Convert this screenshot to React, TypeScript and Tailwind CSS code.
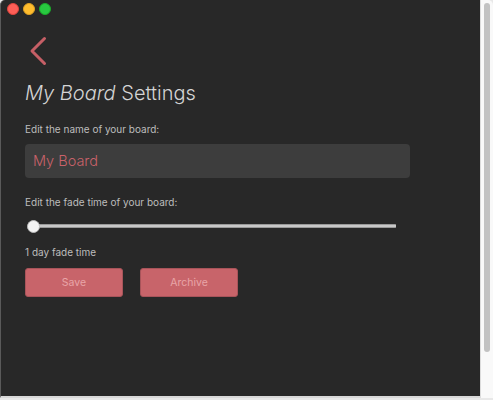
import React from "react";

export default function App() {
  return (
    <div className="w-[493px] h-[400px] bg-[#e8e8e8] flex" style={{ fontFamily: "Inter, 'Noto Sans', sans-serif" }}>
      <div className="flex flex-col w-[480px] h-[398px] bg-[#282828] border-l border-[#5a5a5a] border-b-2 border-b-[#d8d8d8] rounded-tl-[5px]">
        <div className="flex items-center gap-[4px] pl-[6px] pt-[3px] h-[15px]">
          <span className="w-[12px] h-[12px] rounded-full bg-[#fe5f57] border border-[#e0443e]" />
          <span className="w-[12px] h-[12px] rounded-full bg-[#febc2e] border border-[#dea123]" />
          <span className="w-[12px] h-[12px] rounded-full bg-[#28c840] border border-[#1aab29]" />
        </div>
        <div className="pl-[24px] flex flex-col">
          <svg className="mt-[21px] ml-[4px]" width="18" height="30" viewBox="0 0 18 30">
            <polyline points="15.5,2.5 3,15 15.5,27.5" fill="none" stroke="#c65f66" strokeWidth="3" strokeLinecap="round" strokeLinejoin="round" />
          </svg>
          <h1 className="mt-[14px] text-[20px] leading-[26px] font-light text-[#d4d4d4]">
            <span className="italic">My Board</span> Settings
          </h1>
          <p className="mt-[16px] text-[10px] leading-[14px] text-[#bdbdbd]">Edit the name of your board:</p>
          <div className="mt-[8px] w-[385px] h-[34px] rounded-[4px] bg-[#3d3d3d] flex items-center pl-[8px]">
            <span className="text-[14.5px] font-light text-[#c9626a]">My Board</span>
          </div>
          <p className="mt-[17px] text-[10px] leading-[14px] text-[#bdbdbd]">Edit the fade time of your board:</p>
          <div className="relative mt-[11px] h-[12px] w-[372px] flex items-center">
            <div className="ml-[3px] w-[368px] h-[4px] bg-[#c8c8c8] border-y border-[#999] rounded-[1px]" />
            <div className="absolute left-[2px] top-0 w-[13px] h-[13px] rounded-full bg-[#f4f4f4] border border-[#bbb]" />
          </div>
          <p className="mt-[13px] text-[10px] leading-[14px] text-[#bdbdbd]">1 day fade time</p>
          <div className="mt-[9px] flex gap-[17px]">
            <button className="w-[98px] h-[29px] rounded-[3px] bg-[#c8646a] border border-[#a8545a] text-[10.5px] text-[#e8a4a8]">Save</button>
            <button className="w-[98px] h-[29px] rounded-[3px] bg-[#c8646a] border border-[#a8545a] text-[10.5px] text-[#e8a4a8]">Archive</button>
          </div>
        </div>
      </div>
      <div className="w-[13px] h-[398px] bg-[#f9f9f9] border-l border-[#dcdcdc] rounded-tr-[5px] flex justify-center pt-[3px]">
        <div className="w-[6px] h-[349px] rounded-full bg-[#c2c2c2]" />
      </div>
    </div>
  );
}
